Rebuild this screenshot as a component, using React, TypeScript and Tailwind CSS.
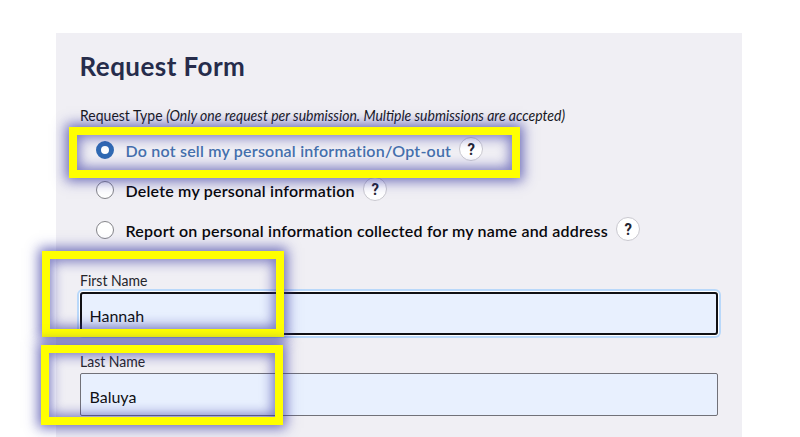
import React from 'react';

function Help() {
  return (
    <span className="flex h-6 w-6 shrink-0 -translate-y-px items-center justify-center rounded-full border border-[#c9c8cf] bg-white font-[Roboto,sans-serif] text-[17px] font-bold leading-none text-[#23252f]">
      <span className="scale-x-[0.88]">?</span>
    </span>
  );
}

function Option({ label, width, checked = false }: { label: string; width: string; checked?: boolean }) {
  return (
    <div className="flex h-10 items-center">
      <span
        className={
          checked
            ? 'h-[18px] w-[18px] shrink-0 rounded-full border-[5px] border-[#306ab3] bg-white'
            : 'h-[18px] w-[18px] shrink-0 rounded-full border border-[#85858a] bg-white'
        }
      />
      <span
        className={`ml-[11.5px] mt-[2px] shrink-0 whitespace-nowrap text-[16px] font-semibold leading-6 tracking-[0.21px] ${width} ${
          checked ? 'text-[#4570ad]' : 'text-[#08080c]'
        }`}
      >
        {label}
      </span>
      <Help />
    </div>
  );
}

const highlight =
  'pointer-events-none absolute border-8 border-[#ffff00] shadow-[0_0_12px_3px_rgba(50,50,160,0.7),inset_0_0_12px_3px_rgba(50,50,160,0.6)]';

export default function App() {
  return (
    <div className="relative h-[437px] w-[800px] overflow-hidden bg-white pl-14 pt-[33px] font-[Lato,sans-serif]">
      <main className="h-[404px] w-[686px] bg-[#f0eff4] px-6 pt-[17px]">
        <h1 className="-ml-[0.5px] h-8 whitespace-nowrap text-[26px] font-bold leading-8 tracking-[0.45px] text-[#262c4b]">Request Form</h1>
        <p className="-ml-[0.5px] mt-[23px] h-5 w-max origin-left scale-x-[0.934] whitespace-nowrap text-[15px] leading-5 text-[#17171c]">
          Request Type <em>(Only one request per submission. Multiple submissions are accepted)</em>
        </p>
        <div className="mt-[5px] pl-4">
          <Option checked label="Do not sell my personal information/Opt-out" width="w-[333.5px]" />
          <Option label="Delete my personal information" width="w-[237.5px]" />
          <Option label="Report on personal information collected for my name and address" width="w-[490.5px]" />
        </div>
        <label className="-ml-[0.5px] mt-5 block h-[22px] w-max origin-left scale-x-[0.934] text-[15px] leading-5 text-[#25252b]">First Name</label>
        <div className="flex h-[43px] w-[638px] items-center rounded-[3px] border-2 border-[#101014] bg-[#e8f0fe] pl-[7.5px] pt-[5px] text-[16px] text-[#101014] shadow-[0_0_0_1px_white,0_0_0_3px_#b9d8fa]">
          Hannah
        </div>
        <label className="-ml-[0.5px] mt-4 block h-[22px] w-max origin-left scale-x-[0.934] text-[15px] leading-5 text-[#25252b]">Last Name</label>
        <div className="flex h-[43px] w-[638px] items-center rounded-[2px] border border-[#717178] bg-[#e8f0fe] pl-[8.5px] pt-[5px] text-[16px] text-[#101014]">
          Baluya
        </div>
      </main>
      <div className={`${highlight} left-[69px] top-[127px] h-[51px] w-[451px]`} />
      <div className={`${highlight} left-[42px] top-[251px] h-[86px] w-[242px]`} />
      <div className={`${highlight} left-[41px] top-[345px] h-[80px] w-[242px]`} />
    </div>
  );
}
